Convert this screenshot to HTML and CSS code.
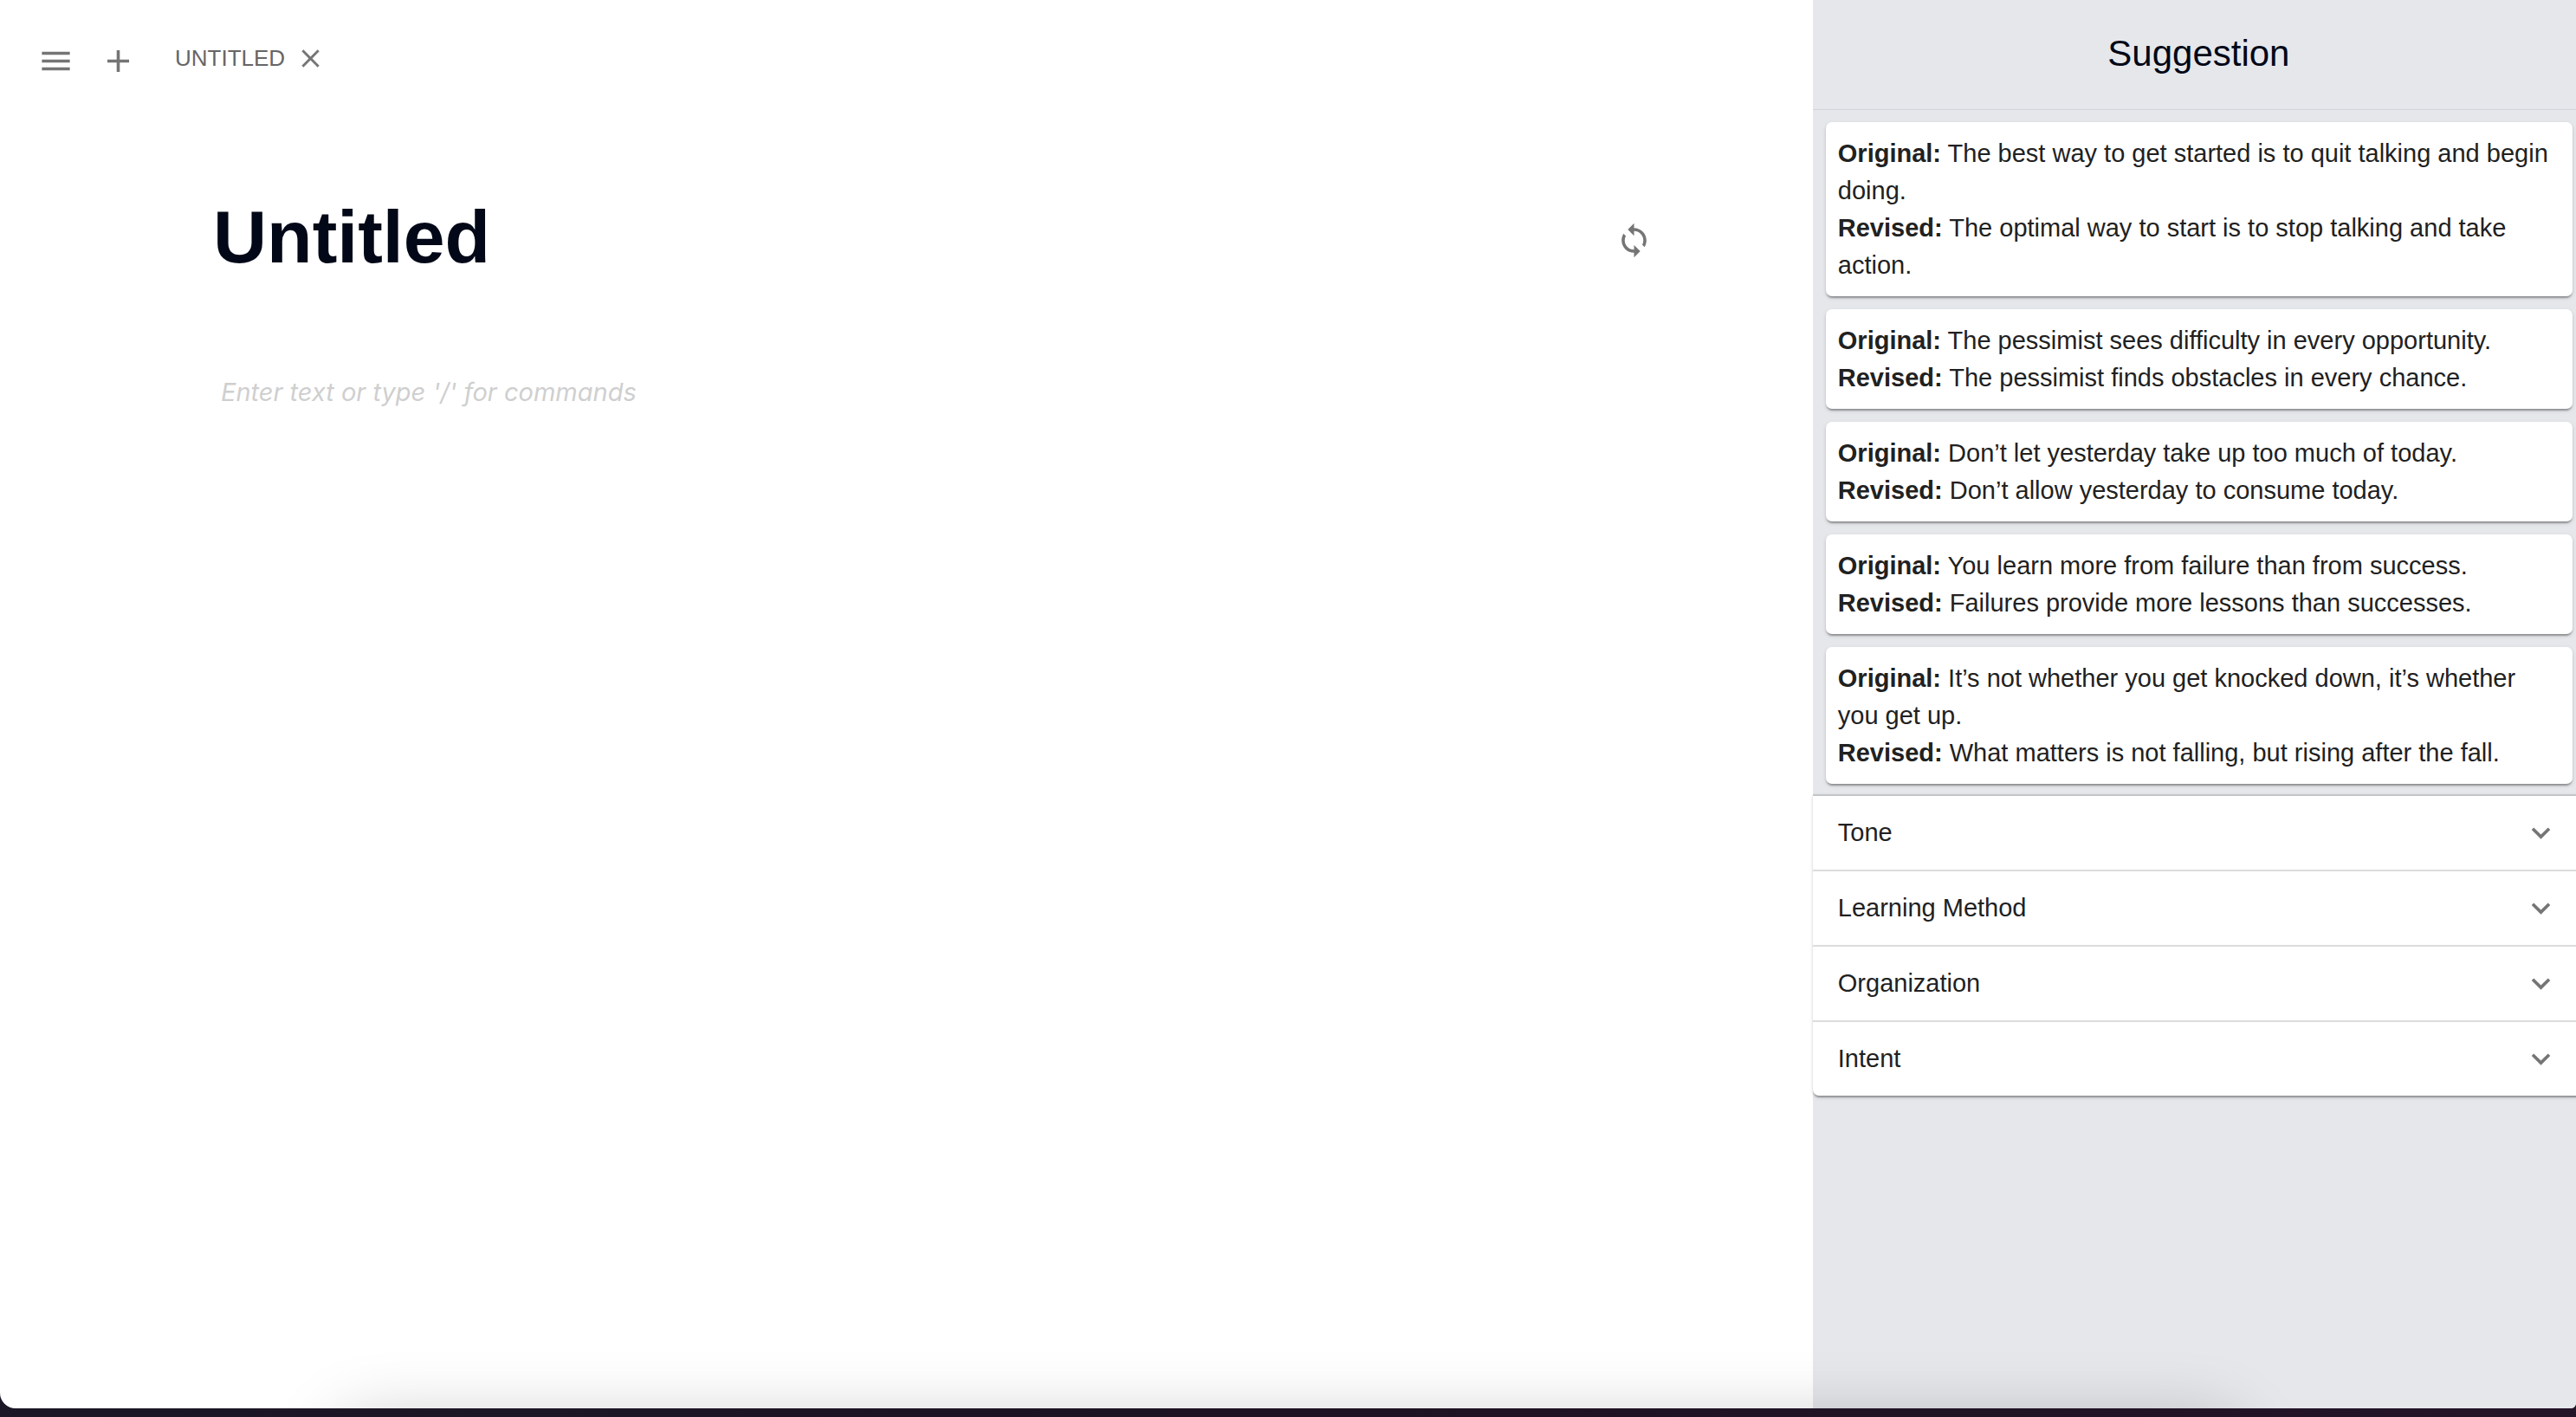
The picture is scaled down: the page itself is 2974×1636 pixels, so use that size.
FILE: index.html
```html
<!DOCTYPE html>
<html lang="en">
<head>
<meta charset="utf-8">
<meta name="viewport" content="width=device-width, initial-scale=1">
<title>Untitled</title>
<link rel="stylesheet" href="styles.css">
</head>
<body>
<div class="window">
  <main class="editor">
    <nav class="toolbar" aria-label="Documents">
      <button class="icon-button" type="button" aria-label="Menu">
        <svg class="icon" viewBox="0 0 24 24"><path d="M3 18h18v-2H3v2zm0-5h18v-2H3v2zm0-7v2h18V6H3z"/></svg>
      </button>
      <button class="icon-button" type="button" aria-label="New document">
        <svg class="icon" viewBox="0 0 24 24"><path d="M19 13h-6v6h-2v-6H5v-2h6V5h2v6h6v2z"/></svg>
      </button>
      <div class="tab">
        <button class="tab-label" type="button">UNTITLED</button>
        <button class="icon-button" type="button" aria-label="Close tab">
          <svg class="icon icon-small" viewBox="0 0 24 24"><path d="M19 6.41 17.59 5 12 10.59 6.41 5 5 6.41 10.59 12 5 17.59 6.41 19 12 13.41 17.59 19 19 17.59 13.41 12z"/></svg>
        </button>
      </div>
    </nav>
    <div class="document">
      <div class="title-row">
        <h1 class="title">Untitled</h1>
        <button class="icon-button sync" type="button" aria-label="Refresh suggestions">
          <svg class="icon" viewBox="0 0 24 24"><path d="M12 4V1L8 5l4 4V6c3.31 0 6 2.69 6 6 0 1.01-.25 1.97-.7 2.8l1.46 1.46C19.54 15.03 20 13.57 20 12c0-4.42-3.58-8-8-8zm0 14c-3.31 0-6-2.69-6-6 0-1.01.25-1.97.7-2.8L5.24 7.74C4.46 8.97 4 10.43 4 12c0 4.42 3.58 8 8 8v3l4-4-4-4v3z"/></svg>
        </button>
      </div>
      <textarea class="body-input" aria-label="Document text" placeholder="Enter text or type '/' for commands"></textarea>
    </div>
  </main>
  <aside class="panel">
    <h2 class="panel-title">Suggestion</h2>
    <div class="cards">
      <article class="card">
        <p><b>Original:</b> The best way to get started is to quit talking and begin doing.</p>
        <p><b>Revised:</b> The optimal way to start is to stop talking and take action.</p>
      </article>
      <article class="card">
        <p><b>Original:</b> The pessimist sees difficulty in every opportunity.</p>
        <p><b>Revised:</b> The pessimist finds obstacles in every chance.</p>
      </article>
      <article class="card">
        <p><b>Original:</b> Don’t let yesterday take up too much of today.</p>
        <p><b>Revised:</b> Don’t allow yesterday to consume today.</p>
      </article>
      <article class="card">
        <p><b>Original:</b> You learn more from failure than from success.</p>
        <p><b>Revised:</b> Failures provide more lessons than successes.</p>
      </article>
      <article class="card">
        <p><b>Original:</b> It’s not whether you get knocked down, it’s whether you get up.</p>
        <p><b>Revised:</b> What matters is not falling, but rising after the fall.</p>
      </article>
    </div>
    <div class="accordion">
      <button class="accordion-row" type="button" aria-expanded="false">Tone
        <svg class="icon" viewBox="0 0 24 24"><path d="M16.59 8.59 12 13.17 7.41 8.59 6 10l6 6 6-6z"/></svg></button>
      <button class="accordion-row" type="button" aria-expanded="false">Learning Method
        <svg class="icon" viewBox="0 0 24 24"><path d="M16.59 8.59 12 13.17 7.41 8.59 6 10l6 6 6-6z"/></svg></button>
      <button class="accordion-row" type="button" aria-expanded="false">Organization
        <svg class="icon" viewBox="0 0 24 24"><path d="M16.59 8.59 12 13.17 7.41 8.59 6 10l6 6 6-6z"/></svg></button>
      <button class="accordion-row" type="button" aria-expanded="false">Intent
        <svg class="icon" viewBox="0 0 24 24"><path d="M16.59 8.59 12 13.17 7.41 8.59 6 10l6 6 6-6z"/></svg></button>
    </div>
  </aside>
  <div class="dock-shadow"></div>
</div>
</body>
</html>
```
FILE: styles.css
```css
* {
  box-sizing: border-box;
}

body {
  margin: 0;
  min-height: 100vh;
  display: flex;
  flex-direction: column;
  padding-bottom: 10px;
  overflow: hidden;
  background: linear-gradient(to right, #1b1726, #1d1322 50%, #241427);
  font-family: "Liberation Sans", Arial, Helvetica, sans-serif;
  font-size: 29px;
  line-height: 43px;
  color: #212121;
}

h1, h2, p {
  margin: 0;
}

button {
  padding: 0;
  border: 0;
  background: none;
  font: inherit;
  color: inherit;
}

.window {
  position: relative;
  flex: 1;
  display: flex;
  overflow: hidden;
  background: #fff;
  border-radius: 0 0 6px 18px;
}

.editor {
  flex: 0 0 calc(70% + 11px);
  display: flex;
  flex-direction: column;
}

.toolbar {
  display: flex;
  align-items: center;
  gap: 29px;
  padding: 49px 43px 0;
}

.icon-button {
  display: flex;
}

.icon {
  width: 43px;
  height: 43px;
  flex: none;
  fill: #757575;
}

.icon-small {
  width: 35px;
  height: 35px;
}

.tab {
  display: flex;
  align-items: center;
  gap: 12px;
  margin-left: 15px;
  padding-bottom: 7px;
}

.tab-label {
  font-size: 26px;
  line-height: 36px;
  color: #666;
}

.document {
  flex: 1;
  display: flex;
  flex-direction: column;
  gap: 106px;
  padding: 130px 185px 60px 246px;
}

.title-row {
  display: flex;
  align-items: center;
  justify-content: space-between;
}

.title {
  font-size: 86px;
  line-height: 103px;
  font-weight: 700;
  color: #020817;
}

.sync {
  padding-top: 8px;
}

.body-input {
  flex: 1;
  padding: 0 9px;
  border: 0;
  outline: 0;
  resize: none;
  background: transparent;
  font: 29px/43px Inter, sans-serif;
  color: #3f3f3f;
}

.body-input::placeholder {
  color: #cfcfcf;
  font-style: italic;
}

.panel {
  flex: 0 0 calc(30% - 1px);
  background: #e5e7eb;
}

.panel-title {
  padding: 30px 0 32px;
  border-bottom: 1px solid #d1d5db;
  font-size: 42px;
  line-height: 64px;
  font-weight: 400;
  text-align: center;
  color: #020817;
}

.cards {
  display: flex;
  flex-direction: column;
  gap: 15px;
  padding: 14px 14px 12px 15px;
}

.card,
.accordion {
  background: #fff;
  border-radius: 7px;
  box-shadow: 0 4px 2px -2px rgba(0, 0, 0, 0.2),
    0 2px 2px rgba(0, 0, 0, 0.14),
    0 2px 5px rgba(0, 0, 0, 0.12);
}

.card {
  padding: 15px 14px 14px;
}

.accordion {
  border-radius: 0 0 7px 7px;
}

.accordion-row {
  display: flex;
  align-items: center;
  justify-content: space-between;
  width: 100%;
  padding: 21px 29px;
  border-top: 2px solid #dcdcdc;
  text-align: left;
}

.accordion-row:first-child {
  border-top-color: #c4c5c9;
}

.dock-shadow {
  position: absolute;
  top: calc(100% + 14px);
  left: 13%;
  right: 13%;
  height: 120px;
  border-radius: 40px;
  box-shadow: 0 0 80px rgba(0, 0, 0, 0.22);
  pointer-events: none;
}
```
